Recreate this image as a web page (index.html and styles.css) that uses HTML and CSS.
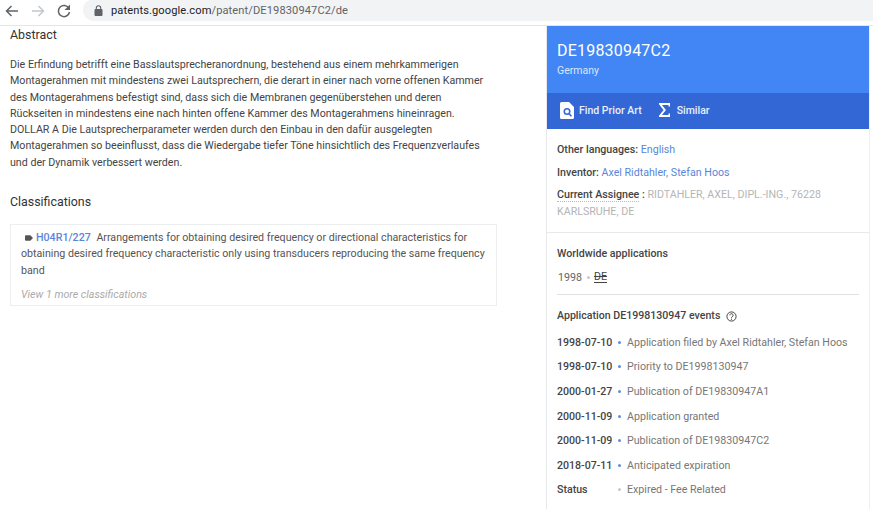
FILE: index.html
```html
<!DOCTYPE html>
<html lang="de">
<head>
<meta charset="utf-8">
<title>DE19830947C2</title>
<link rel="stylesheet" href="styles.css">
</head>
<body>
<header class="toolbar">
  <svg class="nav" width="16" height="16" viewBox="0 0 16 16"><path d="M14 8H3M7.500 3 2.500 8l5 5" fill="none" stroke="#5f6368" stroke-width="1.500"/></svg>
  <svg class="nav" width="16" height="16" viewBox="0 0 16 16"><path d="M2 8h11M8.500 3l5 5-5 5" fill="none" stroke="#c4c7ca" stroke-width="1.500"/></svg>
  <svg class="nav" width="16" height="16" viewBox="0 0 16 16"><path d="M13 5.500A5.600 5.600 0 1 0 13.500 9" fill="none" stroke="#5f6368" stroke-width="1.500"/><path d="M14 1.500V7H8.500z" fill="#5f6368"/></svg>
  <div class="omnibox">
    <svg width="9" height="11" viewBox="0 0 9 11"><rect x="0.500" y="4" width="8" height="7" rx="1" fill="#5f6368"/><path d="M2.300 4.500V3a2.200 2.200 0 0 1 4.400 0v1.500" fill="none" stroke="#5f6368" stroke-width="1.100"/></svg>
    <span class="url"><span class="host">patents.google.com</span>/patent/DE19830947C2/de</span>
  </div>
</header>
<div class="page">
  <main class="content">
    <h2 class="abstract-title">Abstract</h2>
    <p class="abstract">Die Erfindung betrifft eine Basslautsprecheranordnung, bestehend aus einem mehrkammerigen<br>Montagerahmen mit mindestens zwei Lautsprechern, die derart in einer nach vorne offenen Kammer<br>des Montagerahmens befestigt sind, dass sich die Membranen gegenüberstehen und deren<br>Rückseiten in mindestens eine nach hinten offene Kammer des Montagerahmens hineinragen.<br>DOLLAR A Die Lautsprecherparameter werden durch den Einbau in den dafür ausgelegten<br>Montagerahmen so beeinflusst, dass die Wiedergabe tiefer Töne hinsichtlich des Frequenzverlaufes<br>und der Dynamik verbessert werden.</p>
    <h2 class="class-title">Classifications</h2>
    <section class="class-card">
      <p class="class-text"><svg class="tag" width="8" height="6" viewBox="0 0 9 6"><path d="M0 1a1 1 0 0 1 1-1h5l3 3-3 3H1a1 1 0 0 1-1-1z" fill="#555"/></svg><a class="link code">H04R1/227</a> Arrangements for obtaining desired frequency or directional characteristics for obtaining desired frequency characteristic only using transducers reproducing the same frequency band</p>
      <p class="more">View 1 more classifications</p>
    </section>
  </main>
  <aside class="side">
    <div class="hero">
      <div class="number">DE19830947C2</div>
      <div class="country">Germany</div>
    </div>
    <div class="actions">
      <span class="action"><svg width="14" height="17" viewBox="0 0 14 17"><path d="M1.500 0H9l5 5v10.500a1.500 1.500 0 0 1-1.500 1.500h-11A1.500 1.500 0 0 1 0 15.500v-14A1.500 1.500 0 0 1 1.500 0z" fill="#fff"/><circle cx="7" cy="9.500" r="3.500" fill="#3367d6"/><circle cx="7" cy="9.500" r="2" fill="#fff"/><path d="m9.300 12 2.200 2.300" stroke="#3367d6" stroke-width="1.600"/></svg>Find Prior Art</span>
      <span class="action sim"><svg width="11" height="14" viewBox="0 0 11 14"><path d="M10.500 3.500V1H1l4.700 6L1 13h9.500v-2.500" fill="none" stroke="#fff" stroke-width="2"/></svg>Similar</span>
    </div>
    <div class="meta">
      <p class="meta-row"><b>Other languages:</b> <a class="link">English</a></p>
      <p class="meta-row"><b>Inventor:</b> <a class="link">Axel Ridtahler, Stefan Hoos</a></p>
      <p class="meta-row assignee"><b class="dotted">Current Assignee</b> <b>:</b> <span class="grey">RIDTAHLER, AXEL, DIPL.-ING., 76228 KARLSRUHE, DE</span></p>
    </div>
    <div class="apps">
      <h3 class="apps-title">Worldwide applications</h3>
      <div class="ww"><span class="ww-year">1998</span><i class="dot pale"></i><s class="ww-de">DE</s></div>
      <div class="events-head">Application DE1998130947 events
        <svg width="11" height="11" viewBox="0 0 11 11"><circle cx="5.500" cy="5.500" r="4.600" fill="none" stroke="#444" stroke-width="1"/><path d="M3.900 4.300a1.600 1.600 0 1 1 2.500 1.300c-.6.400-.9.600-.9 1.200" fill="none" stroke="#444"/><circle cx="5.500" cy="8.200" r=".6" fill="#444"/></svg>
      </div>
      <ul class="events">
        <li class="event"><span class="date">1998-07-10</span><i class="dot"></i><span class="desc">Application filed by Axel Ridtahler, Stefan Hoos</span></li>
        <li class="event"><span class="date">1998-07-10</span><i class="dot"></i><span class="desc">Priority to DE1998130947</span></li>
        <li class="event"><span class="date">2000-01-27</span><i class="dot"></i><span class="desc">Publication of DE19830947A1</span></li>
        <li class="event"><span class="date">2000-11-09</span><i class="dot"></i><span class="desc">Application granted</span></li>
        <li class="event"><span class="date">2000-11-09</span><i class="dot"></i><span class="desc">Publication of DE19830947C2</span></li>
        <li class="event"><span class="date">2018-07-11</span><i class="dot"></i><span class="desc">Anticipated expiration</span></li>
        <li class="event"><span class="date status">Status</span><i class="dot pale"></i><span class="desc">Expired - Fee Related</span></li>
      </ul>
    </div>
  </aside>
</div>
</body>
</html>
```
FILE: styles.css
```css
* { box-sizing: border-box; }
html, body { margin: 0; height: 100%; overflow: hidden; }
body { background: #fff; color: #3c3c3c; font-family: Roboto, "Liberation Sans", sans-serif; font-size: 11px; display: flex; flex-direction: column; }
h2, h3, p, ul { margin: 0; padding: 0; }
ul { list-style: none; }

.toolbar { flex: none; height: 22px; display: flex; align-items: center; padding: 0 0 1px 4px; gap: 10px; background: #fff; }
.nav { flex: none; }
.omnibox { flex: 1; height: 22px; margin-left: 1px; margin-top: -1px; background: #f1f3f4; border-radius: 11px 0 0 11px; display: flex; align-items: center; padding-left: 11px; gap: 8px; }
.url { font-size: 11.100px; color: #5f6368; letter-spacing: .1px; }
.host { color: #202124; }

.page { flex: 1; display: flex; border-top: 1px solid #e3e5e7; margin-top: 3px; }
.content { width: 546px; flex: none; padding: 1px 0 0 10px; }
.abstract-title { font-size: 12.400px; font-weight: 400; color: #333; line-height: 16px; }
.abstract { margin-top: 14px; font-size: 10.670px; line-height: 16.300px; color: #444; white-space: nowrap; }
.class-title { margin-top: 23px; font-size: 12.400px; font-weight: 400; line-height: 16px; color: #333; }
.class-card { margin-top: 14px; width: 487px; height: 82px; border: 1px solid #eceef0; padding: 5px 10px 0; }
.class-text { font-size: 10.670px; line-height: 16.300px; color: #555; }
.tag { margin: 0 3px 0 4px; }
.code { font-weight: 500; margin-right: 3px; }
.link { color: #5a86d8; }
.more { margin-top: 9px; font-size: 10.670px; line-height: 13px; font-style: italic; color: #aaa; }

.side { width: 324px; flex: none; border-left: 1px solid #e6e8ea; border-right: 1px solid #eeeff1; }
.hero { height: 67px; background: #4285f4; color: #fff; padding: 15px 10px 0; }
.number { font-size: 16px; line-height: 20px; letter-spacing: .2px; }
.country { font-size: 10.500px; line-height: 14px; margin-top: 3px; color: #dbe7fd; }
.actions { height: 36px; background: #3367d6; display: flex; align-items: center; padding: 0 0 2px 13px; color: #e9effb; font-size: 10.500px; font-weight: 500; }
.action { display: flex; align-items: center; gap: 5px; }
.sim { margin-left: 17px; gap: 7px; }
.meta { padding: 13px 10px 0; border-bottom: 1px solid #e8e8e8; height: 104px; }
.meta-row { font-size: 10.670px; line-height: 16px; margin-bottom: 7px; color: #444; }
.meta-row b { font-weight: 500; }
.assignee { margin: -2px 0 0; line-height: 17px; }
.dotted { border-bottom: 1px dotted #bbb; }
.grey { color: #b5b5b5; }
.apps { padding: 13px 10px 0 10px; }
.apps-title { font-size: 10.670px; font-weight: 500; line-height: 16px; color: #444; }
.ww { display: flex; align-items: center; margin-top: 7px; height: 16px; font-size: 10.670px; padding-left: 1px; padding-bottom: 9px; box-sizing: content-box; border-bottom: 1px solid #e2e2e2; }
.ww-year { color: #666; }
.ww-de { color: #444; border-bottom: 1px solid #444; line-height: 11px; }
.ww .dot { margin: 0 4px 0 5px; }
.dot { width: 3px; height: 3px; border-radius: 50%; background: #5c8ee0; flex: none; }
.dot.pale { background: #c8c8c8; }
.events-head { margin-top: 13px; display: flex; align-items: center; gap: 6px; font-size: 10.600px; font-weight: 500; line-height: 16px; color: #444; }
.events { margin-top: 6px; }
.event { display: flex; align-items: center; height: 24.600px; font-size: 10.670px; }
.date { width: 61px; flex: none; font-weight: 500; color: #444; font-size: 10.600px; }
.desc { margin-left: 6px; color: #777; white-space: nowrap; }
```
